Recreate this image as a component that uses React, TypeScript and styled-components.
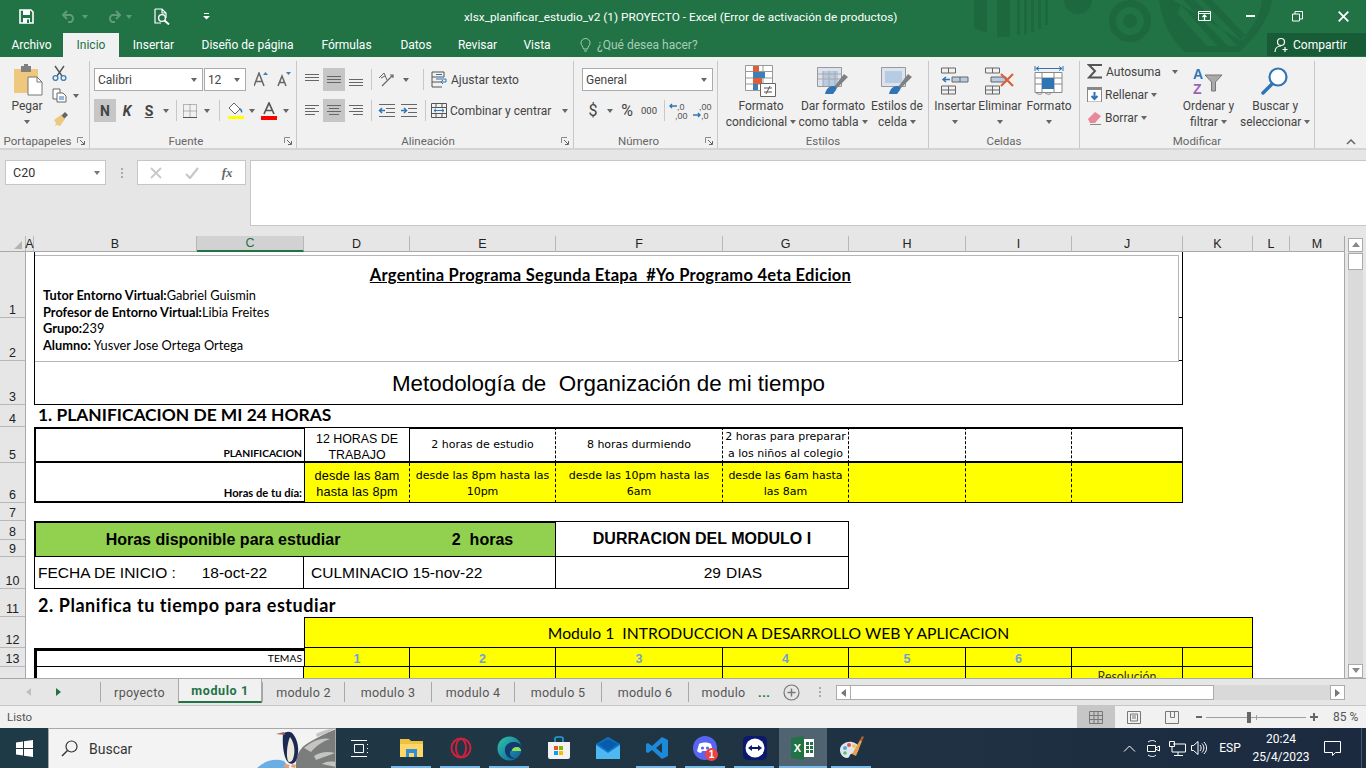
import React from "react";
import styled, { createGlobalStyle } from "styled-components";

const UI = `Roboto, "Noto Sans", sans-serif`;
const CALIBRI = `Lato, "Liberation Sans", sans-serif`;
const ARIAL = `"Liberation Sans", Arial, sans-serif`;
const VERDANA = `"DejaVu Sans", sans-serif`;

const thin = "1px solid #000";
const thick = "2px solid #000";
const heavy = "3px solid #000";
const dash = "1px dashed #000";

const Global = createGlobalStyle`
  html, body { margin: 0; padding: 0; background: #fff; overflow: hidden; }
  * { box-sizing: border-box; }
  svg { display: block; flex-shrink: 0; }
`;

const Window = styled.div`
  width: 1366px;
  height: 768px;
  display: flex;
  flex-direction: column;
  overflow: hidden;
  font-family: ${UI};
`;

/* ---------- title bar ---------- */
const Chrome = styled.div`
  position: relative;
  background: #217346;
`;
const TitleBar = styled.div`
  position: relative;
  height: 33px;
  display: flex;
  align-items: center;
  color: #fff;
  font-size: 11.8px;
`;
const Pattern = styled.svg`
  position: absolute;
  left: 940px;
  top: 0;
  pointer-events: none;
`;
const Qat = styled.div`
  width: 464px;
  display: flex;
  align-items: center;
  padding-left: 19px;
`;
const QatSlot = styled.div<{ $w: number }>`
  width: ${(p) => p.$w}px;
  display: flex;
  align-items: center;
  gap: 5px;
`;
const TitleText = styled.div`
  flex: 1;
  white-space: nowrap;
`;
const WinButtons = styled.div`
  display: flex;
  align-items: center;
`;
const WinButton = styled.div`
  width: 46px;
  height: 30px;
  display: flex;
  align-items: center;
  justify-content: center;
`;

/* ---------- tab row ---------- */
const TabRow = styled.div`
  position: relative;
  height: 24px;
  display: flex;
  align-items: stretch;
  color: #fff;
  font-size: 12px;
`;
const Tab = styled.div<{ $w: number; $active?: boolean }>`
  width: ${(p) => p.$w}px;
  display: flex;
  align-items: center;
  justify-content: center;
  background: ${(p) => (p.$active ? "#f1f1f1" : "transparent")};
  color: ${(p) => (p.$active ? "#217346" : "#fff")};
  white-space: nowrap;
`;
const Hint = styled.div`
  display: flex;
  align-items: center;
  gap: 6px;
  margin-left: 15px;
  color: #a6cdb6;
`;
const Share = styled.div`
  position: absolute;
  right: 0;
  top: 0;
  width: 99px;
  height: 23px;
  display: flex;
  align-items: center;
  gap: 3px;
  padding-left: 7px;
  background: #185c37;
`;

/* ---------- ribbon ---------- */
const Ribbon = styled.div`
  height: 93px;
  display: flex;
  padding-top: 4px;
  background: #f1f1f1;
  border-bottom: 2px solid #d4d4d4;
  color: #444;
  font-size: 12px;
`;
const Group = styled.div<{ $w: number }>`
  width: ${(p) => p.$w}px;
  height: 87px;
  display: flex;
  flex-direction: column;
  border-right: 1px solid #c8c8c8;
`;
const GroupBody = styled.div<{ $pad?: number; $top?: number; $column?: boolean }>`
  height: 72px;
  display: flex;
  flex-direction: ${(p) => (p.$column ? "column" : "row")};
  gap: ${(p) => (p.$column ? "8px" : "0")};
  padding-left: ${(p) => p.$pad ?? 0}px;
  padding-top: ${(p) => p.$top ?? 7}px;
`;
const GroupLabel = styled.div<{ $launch?: boolean }>`
  position: relative;
  height: 15px;
  line-height: 17px;
  padding-right: ${(p) => (p.$launch ? "14px" : "0")};
  text-align: center;
  color: #666;
  font-size: 11.5px;
`;
const Launcher = styled.svg`
  position: absolute;
  right: 4px;
  top: 4px;
`;
const ToolRow = styled.div`
  height: 23px;
  display: flex;
  align-items: center;
`;
const SmallBtn = styled.div<{ $w: number; $active?: boolean; $fs?: number; $ml?: number }>`
  width: ${(p) => p.$w}px;
  height: 23px;
  margin-left: ${(p) => p.$ml ?? 0}px;
  display: flex;
  align-items: center;
  justify-content: center;
  background: ${(p) => (p.$active ? "#c6c6c6" : "transparent")};
  font-size: ${(p) => p.$fs ?? 13}px;
`;
const Letter = styled.span<{ $italic?: boolean; $under?: boolean }>`
  font-family: ${UI};
  font-weight: 700;
  font-size: 14px;
  font-style: ${(p) => (p.$italic ? "italic" : "normal")};
  text-decoration: ${(p) => (p.$under ? "underline" : "none")};
`;
const Rule = styled.div<{ $w: number }>`
  width: ${(p) => p.$w}px;
  height: 21px;
  display: flex;
  justify-content: center;
  &::before {
    content: "";
    width: 1px;
    background: #c8c8c8;
  }
`;
const Caret = styled.span<{ $ml?: number; $color?: string }>`
  display: inline-block;
  width: 0;
  height: 0;
  margin-left: ${(p) => p.$ml ?? 0}px;
  border-left: 3.5px solid transparent;
  border-right: 3.5px solid transparent;
  border-top: 4px solid ${(p) => p.$color ?? "#666"};
`;
const Select = styled.div<{ $w: number }>`
  width: ${(p) => p.$w}px;
  height: 23px;
  display: flex;
  align-items: center;
  justify-content: space-between;
  padding: 0 5px 0 3px;
  margin-right: 1px;
  background: #fff;
  border: 1px solid #ababab;
`;
const LabelBtn = styled.div`
  display: flex;
  align-items: center;
  gap: 3px;
  white-space: nowrap;
`;
const BigBtn = styled.div<{ $w: number; $top?: number }>`
  width: ${(p) => p.$w}px;
  display: flex;
  flex-direction: column;
  align-items: center;
  margin-top: ${(p) => p.$top ?? -4}px;
  line-height: 16px;
  white-space: nowrap;
  text-align: center;
`;
const BigIcon = styled.div`
  height: 34px;
  display: flex;
  align-items: center;
  justify-content: center;
`;
const PasteIcon = styled(BigIcon)`
  height: 37px;
  padding-left: 2px;
`;
const CaretLine = styled.div`
  height: 16px;
  display: flex;
  align-items: center;
  justify-content: center;
  gap: 3px;
`;
const EditColumn = styled.div`
  width: 101px;
  margin-top: -8px;
  padding-left: 7px;
  display: flex;
  flex-direction: column;
`;
const ClipColumn = styled(EditColumn)`
  width: 34px;
  margin: 0 0 0 -2px;
  padding-left: 0;
`;
const EditRow = styled.div`
  height: 23px;
  display: flex;
  align-items: center;
  gap: 3px;
  white-space: nowrap;
`;
const Collapse = styled.div`
  margin-left: auto;
  margin-right: 10px;
  align-self: flex-end;
  padding-bottom: 3px;
`;

/* ---------- formula bar ---------- */
const FormulaBar = styled.div`
  height: 86px;
  display: flex;
  align-items: flex-start;
  padding: 10px 0 0 5px;
  background: #e6e6e6;
`;
const NameBox = styled.div`
  width: 101px;
  height: 25px;
  display: flex;
  align-items: center;
  justify-content: space-between;
  padding: 0 5px 0 7px;
  background: #fff;
  border: 1px solid #c6c6c6;
  font-size: 12.5px;
  color: #333;
`;
const Grip = styled.div<{ $w?: number; $h?: number }>`
  width: ${(p) => p.$w ?? 31}px;
  height: ${(p) => p.$h ?? 25}px;
  display: flex;
  flex-direction: column;
  align-items: center;
  justify-content: center;
  gap: 2px;
  & > i {
    width: 2px;
    height: 2px;
    background: #aaa;
  }
`;
const FxBox = styled.div`
  width: 109px;
  height: 25px;
  display: flex;
  align-items: center;
  margin-right: 4px;
  background: #fff;
  border: 1px solid #c6c6c6;
`;
const FxBtn = styled.div`
  width: 36px;
  display: flex;
  justify-content: center;
  font-family: "Liberation Serif", serif;
  font-style: italic;
  font-weight: 700;
  font-size: 13px;
  color: #666;
`;
const FormulaInput = styled.div`
  flex: 1;
  height: 66px;
  background: #fff;
  border: 1px solid #c6c6c6;
  border-right: 0;
`;

/* ---------- sheet ---------- */
const SheetArea = styled.div`
  height: 442px;
  display: flex;
  background: #e6e6e6;
`;
const COLS = [26, 8, 163, 107, 106, 146, 167, 126, 117, 106, 111, 70, 37, 55];
const ROWS = [16, 66, 43, 44, 22, 36, 40, 18, 19, 17, 32, 28, 31, 19, 60];
const Sheet = styled.div`
  width: 1345px;
  height: 442px;
  overflow: hidden;
  display: grid;
  grid-template-columns: ${COLS.map((c) => c + "px").join(" ")};
  grid-template-rows: ${ROWS.map((r) => r + "px").join(" ")};
  background: #fff;
  border-right: 1px solid #a8a8a8;
`;
const Corner = styled.div`
  grid-column: 1;
  grid-row: 1;
  background: #e6e6e6;
  border-bottom: 1px solid #a8a8a8;
  border-right: 1px solid #b8b8b8;
  display: flex;
  align-items: flex-end;
  justify-content: flex-end;
  padding: 0 3px 2px 0;
`;
const ColHead = styled.div<{ $col: number; $sel?: boolean }>`
  grid-column: ${(p) => p.$col};
  grid-row: 1;
  display: flex;
  align-items: center;
  justify-content: center;
  background: ${(p) => (p.$sel ? "#d2d2d2" : "#e6e6e6")};
  color: ${(p) => (p.$sel ? "#217346" : "#222")};
  border-right: 1px solid #b8b8b8;
  border-bottom: ${(p) => (p.$sel ? "2px solid #217346" : "1px solid #a8a8a8")};
  font-family: ${ARIAL};
  font-size: 12.5px;
`;
const RowHead = styled.div<{ $row: number }>`
  grid-column: 1;
  grid-row: ${(p) => p.$row};
  display: flex;
  align-items: flex-end;
  justify-content: center;
  background: #e6e6e6;
  color: #222;
  border-right: 1px solid #a8a8a8;
  border-bottom: 1px solid #b8b8b8;
  font-family: ${ARIAL};
  font-size: 12.5px;
  line-height: 14px;
`;
const Cell = styled.div<{
  $col: number;
  $span?: number;
  $row: number;
  $rows?: number;
  $bg?: string;
  $t?: string;
  $r?: string;
  $b?: string;
  $l?: string;
}>`
  grid-column: ${(p) => p.$col} / span ${(p) => p.$span ?? 1};
  grid-row: ${(p) => p.$row} / span ${(p) => p.$rows ?? 1};
  display: flex;
  align-items: center;
  justify-content: center;
  text-align: center;
  white-space: pre-wrap;
  color: #000;
  background: ${(p) => p.$bg ?? "transparent"};
  border-top: ${(p) => p.$t ?? "0"};
  border-right: ${(p) => p.$r ?? "0"};
  border-bottom: ${(p) => p.$b ?? "0"};
  border-left: ${(p) => p.$l ?? "0"};
`;
const TitleBox = styled.div`
  grid-column: 3 / span 9;
  grid-row: 2 / span 2;
  z-index: 1;
  margin: 3px 4px -1px 1px;
  padding: 9px 0 0 8px;
  background: #fff;
  border: 1px solid #b5b5b5;
  border-left: 0;
  font-family: ${CALIBRI};
  font-size: 12.8px;
  line-height: 16.5px;
  color: #000;
  white-space: pre;
`;
const BoxTitle = styled.div`
  height: 21px;
  margin-bottom: 1px;
  text-align: center;
  font-size: 16.5px;
  letter-spacing: 0.27px;
  line-height: 20px;
  font-weight: 700;
  text-decoration: underline;
`;
const MainTitle = styled(Cell)`
  font-family: ${ARIAL};
  font-size: 22.4px;
  padding-top: 2px;
`;
const SectionTitle = styled(Cell)`
  justify-content: flex-start;
  padding: 0 0 3px 4px;
  font-family: ${CALIBRI};
  font-weight: 700;
  font-size: 17.4px;
  white-space: pre;
`;
const SectionTitleLower = styled(SectionTitle)`
  padding: 3px 0 0 4px;
  font-size: 18px;
  letter-spacing: 0.55px;
`;
const RightLabel = styled(Cell)`
  justify-content: flex-end;
  align-items: flex-end;
  padding: 0 2px 1px 0;
  font-family: ${CALIBRI};
  font-weight: 700;
  font-size: 10.3px;
  line-height: 14px;
`;
const DayLabel = styled(RightLabel)`
  font-size: 11.2px;
`;
const TopicLabel = styled(RightLabel)`
  align-items: center;
  font-weight: 400;
`;
const ArialCell = styled(Cell)`
  font-family: ${ARIAL};
  font-size: 12.4px;
  line-height: 16px;
  padding-top: 4px;
`;
const WorkHoursCell = styled(Cell)`
  font-family: ${ARIAL};
  font-size: 12.7px;
  letter-spacing: 0.2px;
  line-height: 16px;
  padding: 2px 3px 0;
`;
const VerdanaCell = styled(Cell)`
  font-family: ${VERDANA};
  font-size: 11px;
  line-height: 16.5px;
  padding: 1px 1px 0;
`;
const YellowVerdana = styled(VerdanaCell)`
  padding-top: 3px;
`;
const BannerCell = styled(Cell)`
  font-family: ${ARIAL};
  font-weight: 700;
  font-size: 16px;
`;
const DateCell = styled(Cell)`
  justify-content: flex-start;
  padding-left: 3px;
  font-family: ${ARIAL};
  font-size: 15.5px;
  white-space: pre;
`;
const CulminaCell = styled(DateCell)`
  padding-left: 7px;
`;
const DaysCell = styled(DateCell)`
  justify-content: flex-end;
  padding: 0 2px 0 0;
`;
const ModuleCell = styled(Cell)`
  font-family: ${CALIBRI};
  font-size: 15.7px;
`;
const TopicCell = styled(Cell)`
  font-family: ${ARIAL};
  font-weight: 700;
  font-size: 12.5px;
  color: #6f9fe0;
  padding-top: 3px;
`;
const ResolveCell = styled(Cell)`
  align-items: flex-start;
  padding-top: 2px;
  font-family: ${CALIBRI};
  font-size: 12.4px;
  color: #333;
`;

/* ---------- scrollbars ---------- */
const VScroll = styled.div`
  width: 21px;
  padding: 2px 3px 0 3px;
  display: flex;
  flex-direction: column;
`;
const VTrack = styled.div`
  width: 15px;
  height: 440px;
  display: flex;
  flex-direction: column;
  background: #dadada;
`;
const ScrollBtn = styled.div<{ $w: number; $h: number }>`
  width: ${(p) => p.$w}px;
  height: ${(p) => p.$h}px;
  flex-shrink: 0;
  display: flex;
  align-items: center;
  justify-content: center;
  background: #fff;
  border: 1px solid #ababab;
`;
const VThumb = styled.div`
  width: 15px;
  height: 17px;
  margin-top: 1px;
  background: #fff;
  border: 1px solid #ababab;
`;
const Spacer = styled.div`
  flex: 1;
`;

/* ---------- sheet tabs ---------- */
const TabsBar = styled.div`
  height: 28px;
  display: flex;
  align-items: flex-start;
  background: #e6e6e6;
  border-top: 1px solid #a8a8a8;
  border-bottom: 1px solid #c6c6c6;
  font-size: 12.5px;
  color: #555;
`;
const TabNav = styled.div`
  width: 100px;
  height: 26px;
  display: flex;
  align-items: center;
  gap: 22px;
  padding-left: 25px;
`;
const SheetTab = styled.div<{ $w: number; $active?: boolean }>`
  width: ${(p) => p.$w}px;
  height: ${(p) => (p.$active ? "25px" : "20px")};
  margin-top: ${(p) => (p.$active ? "-1px" : "3px")};
  display: flex;
  align-items: center;
  justify-content: center;
  white-space: nowrap;
  letter-spacing: ${(p) => (p.$active ? "0.6px" : "0.3px")};
  background: ${(p) => (p.$active ? "#f1f1f1" : "transparent")};
  color: ${(p) => (p.$active ? "#217346" : "#555")};
  font-weight: ${(p) => (p.$active ? 700 : 400)};
  border-left: 1px solid #a8a8a8;
  border-right: ${(p) => (p.$active ? "1px solid #a8a8a8" : "0")};
  border-bottom: ${(p) => (p.$active ? "2px solid #217346" : "0")};
  border-top: ${(p) => (p.$active ? "1px solid #a8a8a8" : "0")};
`;
const TabOverflow = styled.div`
  width: 19px;
  margin-top: 3px;
  height: 20px;
  display: flex;
  align-items: center;
  color: #217346;
  font-weight: 700;
  letter-spacing: 0.5px;
`;
const AddSheet = styled.div`
  width: 28px;
  height: 26px;
  display: flex;
  align-items: center;
  justify-content: center;
`;
const HScroll = styled.div`
  width: 509px;
  height: 15px;
  margin: 6px 0 0 1px;
  display: flex;
  background: #d9d9d9;
`;
const HThumb = styled.div`
  width: 363px;
  height: 15px;
  background: #fff;
  border: 1px solid #ababab;
  border-left: 0;
`;

/* ---------- status bar ---------- */
const StatusBar = styled.div`
  height: 22px;
  display: flex;
  align-items: center;
  padding-left: 7px;
  background: #f1f1f1;
  font-size: 11.5px;
  color: #555;
`;
const ViewBtn = styled.div<{ $active?: boolean }>`
  width: 38px;
  height: 22px;
  display: flex;
  align-items: center;
  justify-content: center;
  background: ${(p) => (p.$active ? "#c6c6c6" : "transparent")};
`;
const ZoomMinus = styled.div`
  width: 6px;
  height: 2px;
  margin-left: 5px;
  background: #666;
`;
const ZoomSlider = styled.div`
  position: relative;
  width: 100px;
  height: 1px;
  margin: 0 4px;
  background: #a0a0a0;
`;
const ZoomThumb = styled.div`
  position: absolute;
  left: 41px;
  top: -5px;
  width: 4px;
  height: 11px;
  background: #666;
`;
const ZoomTick = styled.div`
  position: absolute;
  left: 50px;
  top: -2px;
  width: 1px;
  height: 5px;
  background: #a0a0a0;
`;
const ZoomPlus = styled.div`
  position: relative;
  width: 8px;
  height: 2px;
  background: #666;
  &::after {
    content: "";
    position: absolute;
    left: 3px;
    top: -3px;
    width: 2px;
    height: 8px;
    background: #666;
  }
`;
const ZoomValue = styled.div`
  width: 48px;
  padding-left: 15px;
  white-space: nowrap;
  font-size: 12px;
`;

/* ---------- taskbar ---------- */
const Taskbar = styled.div`
  height: 40px;
  display: flex;
  align-items: center;
  background: linear-gradient(90deg, #1f3a47 0%, #203544 50%, #1c2a40 100%);
  color: #fff;
`;
const StartBtn = styled.div`
  width: 48px;
  height: 40px;
  display: flex;
  align-items: center;
  justify-content: center;
`;
const SearchBox = styled.div`
  position: relative;
  width: 288px;
  height: 40px;
  display: flex;
  align-items: center;
  gap: 11px;
  padding-left: 12px;
  background: #f3f3f3;
  border: 1px solid #a8a8a8;
  border-bottom: 0;
  color: #333;
  font-size: 14px;
  overflow: hidden;
`;
const Penguin = styled.svg`
  position: absolute;
  right: -1px;
  top: -1px;
`;
const TaskViewBtn = styled.div`
  width: 51px;
  height: 40px;
  padding-right: 3px;
  display: flex;
  align-items: center;
  justify-content: center;
`;
const TaskIcons = styled.div`
  display: flex;
  height: 40px;
`;
const TaskIcon = styled.div<{ $w?: number; $on?: boolean; $open?: boolean }>`
  position: relative;
  width: ${(p) => p.$w ?? 49}px;
  height: 40px;
  display: flex;
  align-items: center;
  justify-content: center;
  background: ${(p) => (p.$on ? "#4f6470" : "transparent")};
  &::after {
    content: "";
    display: ${(p) => (p.$open ? "block" : "none")};
    position: absolute;
    left: ${(p) => (p.$on ? "0" : "4px")};
    right: ${(p) => (p.$on ? "0" : "5px")};
    bottom: 0;
    height: 2px;
    background: #76b9ed;
  }
`;
const Tray = styled.div`
  margin-left: auto;
  display: flex;
  align-items: center;
  height: 40px;
  font-size: 12px;
`;
const TraySlot = styled.div<{ $w: number }>`
  width: ${(p) => p.$w}px;
  display: flex;
  justify-content: center;
`;
const Clock = styled.div`
  width: 60px;
  text-align: center;
  line-height: 18px;
  white-space: nowrap;
`;
const ShowDesktop = styled.div`
  width: 13px;
  height: 40px;
  padding-left: 8px;
  &::before {
    content: "";
    display: block;
    width: 1px;
    height: 40px;
    background: #46586a;
  }
`;

/* ---------- icons ---------- */
const SaveIcon = () => (
  <svg width="15" height="15" viewBox="0 0 15 15">
    <path d="M1 1h11l2 2v11H1z" fill="none" stroke="#fff" strokeWidth="1.6" />
    <path d="M4 1h7v5H4z" fill="#fff" />
    <path d="M4 9h7v5H4z" fill="#fff" />
    <path d="M8 10.5h2V14H8z" fill="#217346" />
  </svg>
);
const UndoIcon = () => (
  <svg width="15" height="13" viewBox="0 0 15 13">
    <path d="M5 1L1 5l4 4M1 5h8a4 4 0 0 1 0 7H6" fill="none" stroke="#5f9a7b" strokeWidth="2" />
  </svg>
);
const RedoIcon = () => (
  <svg width="15" height="13" viewBox="0 0 15 13">
    <path d="M10 1l4 4-4 4M14 5H6a4 4 0 0 0 0 7h3" fill="none" stroke="#5f9a7b" strokeWidth="2" />
  </svg>
);
const PreviewIcon = () => (
  <svg width="16" height="17" viewBox="0 0 16 17">
    <path d="M1 1h7l4 4v5M1 1v14h6M8 1v4h4" fill="none" stroke="#fff" strokeWidth="1.2" />
    <circle cx="8" cy="10" r="3.4" fill="none" stroke="#fff" strokeWidth="1.4" />
    <path d="M10.5 12.5L15 16.4" stroke="#fff" strokeWidth="2" />
  </svg>
);
const Launch = () => (
  <Launcher width="8" height="8" viewBox="0 0 8 8">
    <path d="M0.5 6V0.5H6" fill="none" stroke="#8a8a8a" />
    <path d="M3 3l4 4M7.5 4v3.5H4" fill="none" stroke="#666" />
  </Launcher>
);
const Paste = () => (
  <svg width="30" height="32" viewBox="0 0 30 32">
    <path d="M1 5h24v24H1z" fill="#edc87e" />
    <path d="M8 2h10v6H8z" fill="#7f7f7f" />
    <path d="M11 0h4v3h-4z" fill="#7f7f7f" />
    <path d="M15 13h9l5 5v13H15z" fill="#fff" stroke="#777" />
    <path d="M24 13v5h5" fill="none" stroke="#777" />
  </svg>
);
const Scissors = () => (
  <svg width="15" height="16" viewBox="0 0 15 16">
    <path d="M3 1l7 10M12 1L5 11" stroke="#555" strokeWidth="1.4" fill="none" />
    <circle cx="3.5" cy="13" r="2.4" fill="none" stroke="#3f7fb8" strokeWidth="1.4" />
    <circle cx="11.5" cy="13" r="2.4" fill="none" stroke="#3f7fb8" strokeWidth="1.4" />
  </svg>
);
const Copy = () => (
  <svg width="15" height="15" viewBox="0 0 15 15">
    <path d="M1 1h7v10H1z" fill="#fff" stroke="#666" />
    <path d="M5 5h6l3 3v6H5z" fill="#fff" stroke="#666" />
    <path d="M7 9h5M7 11h5" stroke="#2f75b5" />
  </svg>
);
const Brush = () => (
  <svg width="16" height="14" viewBox="0 0 16 14">
    <path d="M9 4l4-4 3 3-4 4z" fill="#666" />
    <path d="M2 8l7-5 4 4-5 7-3-1-2 1 1-3z" fill="#edc87e" />
  </svg>
);
const GrowA = ({ small, up }: { small?: boolean; up?: boolean }) => (
  <svg width="14" height="15" viewBox="0 0 14 15">
    <path d={small ? "M1 14L5 4l4 10M2.6 10.5h5" : "M0 14L5 1l5 13M2 9.5h6"} fill="none" stroke="#666" strokeWidth="1.5" />
    <path d={up ? "M9 3l2.5-3L14 3z" : "M9 0h5l-2.5 3z"} fill="#3f7fb8" />
  </svg>
);
const BordersIcon = () => (
  <svg width="14" height="14" viewBox="0 0 14 14">
    <path d="M.5.5h13v13H.5zM7 .5v13M.5 7h13" fill="none" stroke="#777" strokeDasharray="1 1" />
    <path d="M0 13.5h14" stroke="#555" />
  </svg>
);
const FillIcon = () => (
  <svg width="17" height="18" viewBox="0 0 17 18">
    <path d="M7 1l6 6-5 5-6-6z" fill="#fff" stroke="#666" />
    <path d="M13 6c2 1 3 3 2 5-1-1-2-2-2-5z" fill="#2f75b5" />
    <path d="M1 14h16v3H1z" fill="#ffff00" />
  </svg>
);
const ColorIcon = () => (
  <svg width="16" height="18" viewBox="0 0 16 18">
    <path d="M3 12L8 1l5 11M4.7 8.5h6.6" fill="none" stroke="#555" strokeWidth="1.7" />
    <path d="M0 14h16v4H0z" fill="#f00" />
  </svg>
);
const Lines = ({ rows }: { rows: [number, number, number?][] }) => (
  <svg width="16" height="14" viewBox="0 0 16 14">
    {rows.map(([y, x0, x1], i) => (
      <path key={i} d={`M${x0} ${y}.5H${x1 ?? 16 - x0}`} stroke="#666" />
    ))}
  </svg>
);
const Orient = () => (
  <svg width="17" height="15" viewBox="0 0 17 15">
    <path d="M1 6l5-5 3 7M3 6l4-2" fill="none" stroke="#666" />
    <path d="M4 14L15 3M12 3h3v3" fill="none" stroke="#666" strokeWidth="1.2" />
  </svg>
);
const Indent = ({ back }: { back?: boolean }) => (
  <svg width="17" height="13" viewBox="0 0 17 13">
    <path d="M1 .5h16M8 4.5h9M8 8.5h9M1 12.5h16" stroke="#666" />
    <path d={back ? "M7 6.5H2M4 4L1.5 6.5 4 9" : "M1 6.5h5M4 4l2.5 2.5L4 9"} fill="none" stroke="#2f75b5" strokeWidth="1.5" />
  </svg>
);
const Wrap = () => (
  <svg width="17" height="17" viewBox="0 0 17 17">
    <path d="M1 1h12v5H1zM1 6v10h10M1 11h10" fill="none" stroke="#555" />
    <path d="M5 3.5h6M5 8h10v3H10M12 9l-2 2 2 2" fill="none" stroke="#2f75b5" />
  </svg>
);
const Merge = () => (
  <svg width="16" height="15" viewBox="0 0 16 15">
    <path d="M.5.5h15v14H.5zM.5 4.5h15M.5 10.5h15M5 .5v4M11 .5v4M5 10.5v4M11 10.5v4" fill="none" stroke="#555" />
    <path d="M3 7.5h10M5 5.8L3 7.5l2 1.7M11 5.8l2 1.7-2 1.7" fill="none" stroke="#2f75b5" />
  </svg>
);
const DecIcon = ({ more }: { more?: boolean }) => (
  <svg width="20" height="20" viewBox="0 0 20 20">
    <text x={more ? 7 : 8} y="9" fontSize="9" fontFamily={ARIAL} fill="#555">{more ? ",00" : ",0"}</text>
    <text x={more ? 9 : 6} y="18" fontSize="9" fontFamily={ARIAL} fill="#555">{more ? ",0" : ",00"}</text>
    <path d={more ? "M1 14h7M6 12l2 2-2 2" : "M8 5H1M3 3L1 5l2 2"} fill="none" stroke="#2f75b5" strokeWidth="1.4" />
  </svg>
);
const CondFormat = () => (
  <svg width="32" height="32" viewBox="0 0 32 32">
    <path d="M.5.5h27v25H.5zM9 .5v25M18 .5v25M.5 6.5h27M.5 13h27M.5 19h27" fill="#fff" stroke="#999" />
    <path d="M8 1h6v6H8z" fill="#d9603c" />
    <path d="M8 7h12v6H8z" fill="#3f7fb8" />
    <path d="M8 13h9v6H8z" fill="#d9603c" />
    <path d="M8 19h5v6H8z" fill="#3f7fb8" />
    <path d="M15.5 18.5h15v13h-15z" fill="#fff" stroke="#666" />
    <path d="M19 23h8M19 27h8M25 21l-4 8" stroke="#555" fill="none" />
  </svg>
);
const TableStyle = ({ fillAll }: { fillAll?: boolean }) => (
  <svg width="32" height="32" viewBox="0 0 32 32">
    <path d="M.5 2.5h24v19H.5z" fill="#dce3ee" stroke="#999" />
    <path d={fillAll ? "M4 6h17v12H4z" : "M6 6h15v15H6z"} fill="#b7cbe2" />
    {!fillAll && <path d="M6 6v15M12 6v15M18 6v15M1 9h23M1 14h23" stroke="#aaa" fill="none" />}
    <path d="M17 22l10-13 4 3-12 12z" fill="#808080" />
    <path d="M8 29c1-5 4-8 8-8 3 0 4 2 3 4l-3 4z" fill="#2f75b5" />
  </svg>
);
const InsertIcon = () => (
  <svg width="28" height="28" viewBox="0 0 28 28">
    <path d="M.5 1h14v5H.5zM7.5 1v5M.5 19h14v8H.5zM.5 23h14M7.5 19v8" fill="none" stroke="#666" />
    <path d="M11 10h16v5H11z" fill="#b7cbe2" stroke="#666" />
    <path d="M19 10v5" stroke="#666" />
    <path d="M9 12.5H2M5 10l-3 2.5L5 15" fill="none" stroke="#2f75b5" strokeWidth="1.5" />
  </svg>
);
const DeleteIcon = () => (
  <svg width="30" height="28" viewBox="0 0 30 28">
    <path d="M.5 1h14v5H.5zM7.5 1v5M.5 19h14v8H.5zM.5 23h14M7.5 19v8" fill="none" stroke="#666" />
    <path d="M6 10h15v5H6z" fill="#b7cbe2" stroke="#666" />
    <path d="M16 7l12 12M28 7L16 19" stroke="#d9603c" strokeWidth="2.2" />
  </svg>
);
const FormatIcon = () => (
  <svg width="30" height="30" viewBox="0 0 30 30">
    <path d="M1 0v5M29 0v5M2 2.5h26M2 2.5l3-2M2 2.5l3 2M28 2.5l-3-2M28 2.5l-3 2" fill="none" stroke="#2f75b5" />
    <path d="M1 6.5h27v20H1zM8 6.5v20M20 6.5v20M1 12h27M1 18h27" fill="#fff" stroke="#888" />
    <path d="M8 12h12v11H8z" fill="#2f75b5" />
    <path d="M1 26c3 3 7 3 8 0M10 26c3 3 7 3 8 0" fill="none" stroke="#888" />
  </svg>
);
const Sigma = () => (
  <svg width="16" height="15" viewBox="0 0 16 15">
    <path d="M15 1H2l6 6-6 6.5h13" fill="none" stroke="#555" strokeWidth="2" />
  </svg>
);
const FillDown = () => (
  <svg width="15" height="15" viewBox="0 0 15 15">
    <path d="M.5 2h14v13H.5z" fill="#fff" stroke="#888" />
    <path d="M0 0h15v3H0z" fill="#888" />
    <path d="M7.5 5v7M4.5 9l3 3 3-3" fill="none" stroke="#2f75b5" strokeWidth="2" />
  </svg>
);
const Eraser = () => (
  <svg width="15" height="15" viewBox="0 0 15 15">
    <path d="M1 9l7-7 6 4-6 7H3z" fill="#e88898" />
    <path d="M3 14.5h11" stroke="#888" />
  </svg>
);
const SortIcon = () => (
  <svg width="30" height="30" viewBox="0 0 30 30">
    <text x="0" y="13" fontSize="14" fontWeight="700" fontFamily={ARIAL} fill="#2f75b5">A</text>
    <text x="0" y="28" fontSize="14" fontWeight="700" fontFamily={ARIAL} fill="#9a63b8">Z</text>
    <path d="M12 9h17l-6.5 7v9h-4v-9z" fill="#aaa" stroke="#777" />
  </svg>
);
const FindIcon = () => (
  <svg width="28" height="28" viewBox="0 0 28 28">
    <circle cx="17" cy="10" r="8.5" fill="#fff" stroke="#2f75b5" strokeWidth="2.2" />
    <path d="M11 17L2 26" stroke="#2f75b5" strokeWidth="3.5" strokeLinecap="round" />
  </svg>
);
const Cross = () => (
  <svg width="12" height="12" viewBox="0 0 12 12">
    <path d="M1 1l10 10M11 1L1 11" stroke="#c8c8c8" strokeWidth="1.8" />
  </svg>
);
const Check = () => (
  <svg width="14" height="12" viewBox="0 0 14 12">
    <path d="M1 7l4 4 8-10" fill="none" stroke="#c8c8c8" strokeWidth="2.2" />
  </svg>
);
const GridIcon = ({ d }: { d: string }) => (
  <svg width="14" height="13" viewBox="0 0 14 13">
    <path d="M.5.5h13v12H.5z" fill="none" stroke="#777" />
    <path d={d} fill="none" stroke="#777" />
  </svg>
);
const Triangle = ({ dir, color }: { dir: "left" | "right" | "up" | "down"; color: string }) => {
  const d = { left: "M6 0v8L1 4z", right: "M1 0v8l5-4z", up: "M0 6h8L4 1z", down: "M0 1h8L4 6z" }[dir];
  return (
    <svg width="8" height="8" viewBox="0 0 8 8">
      <path d={d} fill={color} />
    </svg>
  );
};

const tabs: [string, number, boolean?][] = [
  ["Archivo", 63],
  ["Inicio", 56, true],
  ["Insertar", 69],
  ["Diseño de página", 119],
  ["Fórmulas", 79],
  ["Datos", 60],
  ["Revisar", 63],
  ["Vista", 56],
];
const sheetTabs: [string, number, boolean?][] = [
  ["rpoyecto", 78],
  ["modulo 1", 84, true],
  ["modulo 2", 82],
  ["modulo 3", 87],
  ["modulo 4", 83],
  ["modulo 5", 87],
  ["modulo 6", 87],
  ["modulo", 70],
];
const colLetters = ["A", "B", "C", "D", "E", "F", "G", "H", "I", "J", "K", "L", "M"];

export default function App() {
  return (
    <Window>
      <Global />
      <Chrome>
        <Pattern width="340" height="57" viewBox="0 0 340 57">
          <g fill="#1e683f">
            <path d="M34 0h13v33l-13-5zM57 0h13v37H57zM77 0h3v35h-3zM84 0h3v34h-3zM91 0h3v32h-3zM98 0h3v29h-3zM105 0h3v25h-3z" />
            <circle cx="138" cy="0" r="14" />
            <path fillRule="evenodd" d="M190 0a21 21 0 1 0 .01 0zM190 7a14 14 0 1 1-.01 0z" />
            <circle cx="190" cy="21" r="7" />
            <path fillRule="evenodd" d="M219 0c3 28 22 52 28 52h52c12-10 30-30 33-52h-10c-2 18-12 32-22 40L233 0zM241 5l36 41h-10L238 14zM255 0l42 46h-9L243 0zM272 0l34 36-4 5L262 0z" />
          </g>
        </Pattern>
        <TitleBar>
          <Qat>
            <QatSlot $w={43}><SaveIcon /></QatSlot>
            <QatSlot $w={44}><UndoIcon /><Caret $color="#5f9a7b" /></QatSlot>
            <QatSlot $w={48}><RedoIcon /><Caret $color="#5f9a7b" /></QatSlot>
            <QatSlot $w={49}><PreviewIcon /></QatSlot>
            <QatSlot $w={20}>
              <svg width="7" height="7" viewBox="0 0 7 7"><path d="M1 .5h5" stroke="#fff" /><path d="M0 3h7L3.5 6.5z" fill="#fff" /></svg>
            </QatSlot>
          </Qat>
          <TitleText>xlsx_planificar_estudio_v2 (1) PROYECTO - Excel (Error de activación de productos)</TitleText>
          <WinButtons>
            <WinButton>
              <svg width="14" height="11" viewBox="0 0 14 11"><path d="M.5.5h12v9H.5zM.5 2.5h12" fill="none" stroke="#fff" /><path d="M6.5 9V4M4.5 6l2-2 2 2" fill="none" stroke="#fff" strokeWidth="1.3" /></svg>
            </WinButton>
            <WinButton>
              <svg width="10" height="3" viewBox="0 0 10 3"><path d="M0 0h9v2H0z" fill="#fff" /></svg>
            </WinButton>
            <WinButton>
              <svg width="11" height="11" viewBox="0 0 11 11"><path d="M.5 3h7v7h-7zM3 3V.5h7.5V8H8" fill="none" stroke="#fff" /></svg>
            </WinButton>
            <WinButton>
              <svg width="11" height="11" viewBox="0 0 11 11"><path d="M.7.7l9.6 9.6M10.3.7L.7 10.3" stroke="#fff" strokeWidth="1.8" /></svg>
            </WinButton>
          </WinButtons>
        </TitleBar>

        <TabRow>
          {tabs.map(([name, w, active]) => (
            <Tab key={name} $w={w} $active={active}>{name}</Tab>
          ))}
          <Hint>
            <svg width="11" height="15" viewBox="0 0 11 15"><path d="M3.5 11C3 8 1 7.5 1 5a4.5 4.5 0 0 1 9 0c0 2.5-2 3-2.5 6zM4 13h3" fill="none" stroke="#a6cdb6" /></svg>
            ¿Qué desea hacer?
          </Hint>
          <Share>
            <svg width="16" height="16" viewBox="0 0 16 16"><circle cx="7" cy="5" r="3.5" fill="none" stroke="#fff" strokeWidth="1.2" /><path d="M1 15c0-4 3-6 6-6M11 10v5M8.5 12.5h5" fill="none" stroke="#fff" strokeWidth="1.2" /></svg>
            Compartir
          </Share>
        </TabRow>
      </Chrome>

      <Ribbon>
        <Group $w={90}>
          <GroupBody $top={0}>
            <BigBtn $w={54} $top={0}>
              <PasteIcon><Paste /></PasteIcon>
              Pegar
              <CaretLine><Caret /></CaretLine>
            </BigBtn>
            <ClipColumn>
              <EditRow><Scissors /></EditRow>
              <EditRow><Copy /><Caret $ml={3} /></EditRow>
              <EditRow><Brush /></EditRow>
            </ClipColumn>
          </GroupBody>
          <GroupLabel $launch>Portapapeles<Launch /></GroupLabel>
        </Group>

        <Group $w={207}>
          <GroupBody $pad={4} $column>
            <ToolRow>
              <Select $w={110}>Calibri<Caret /></Select>
              <Select $w={42}>12<Caret /></Select>
              <SmallBtn $w={22} $ml={4}><GrowA up /></SmallBtn>
              <SmallBtn $w={24}><GrowA small /></SmallBtn>
            </ToolRow>
            <ToolRow>
              <SmallBtn $w={22} $active><Letter>N</Letter></SmallBtn>
              <SmallBtn $w={22}><Letter $italic>K</Letter></SmallBtn>
              <SmallBtn $w={22}><Letter $under>S</Letter></SmallBtn>
              <SmallBtn $w={12}><Caret /></SmallBtn>
              <Rule $w={8} />
              <SmallBtn $w={20}><BordersIcon /></SmallBtn>
              <SmallBtn $w={14}><Caret /></SmallBtn>
              <Rule $w={10} />
              <SmallBtn $w={22}><FillIcon /></SmallBtn>
              <SmallBtn $w={12}><Caret /></SmallBtn>
              <SmallBtn $w={22}><ColorIcon /></SmallBtn>
              <SmallBtn $w={12}><Caret /></SmallBtn>
            </ToolRow>
          </GroupBody>
          <GroupLabel $launch>Fuente<Launch /></GroupLabel>
        </Group>

        <Group $w={277}>
          <GroupBody $pad={4} $column>
            <ToolRow>
              <SmallBtn $w={22}><Lines rows={[[1, 1], [4, 1], [7, 1]]} /></SmallBtn>
              <SmallBtn $w={22} $active><Lines rows={[[3, 1], [6, 1], [9, 1]]} /></SmallBtn>
              <SmallBtn $w={22}><Lines rows={[[6, 1], [9, 1], [12, 1]]} /></SmallBtn>
              <Rule $w={8} />
              <SmallBtn $w={22}><Orient /></SmallBtn>
              <SmallBtn $w={18}><Caret /></SmallBtn>
              <Rule $w={16} />
              <LabelBtn><Wrap />Ajustar texto</LabelBtn>
            </ToolRow>
            <ToolRow>
              <SmallBtn $w={22}><Lines rows={[[1, 1, 15], [4, 1, 11], [7, 1, 15], [10, 1, 11]]} /></SmallBtn>
              <SmallBtn $w={22} $active><Lines rows={[[1, 1], [4, 3], [7, 1], [10, 3]]} /></SmallBtn>
              <SmallBtn $w={22}><Lines rows={[[1, 1, 15], [4, 5, 15], [7, 1, 15], [10, 5, 15]]} /></SmallBtn>
              <Rule $w={8} />
              <SmallBtn $w={22}><Indent back /></SmallBtn>
              <SmallBtn $w={22}><Indent /></SmallBtn>
              <Rule $w={12} />
              <LabelBtn><Merge />Combinar y centrar<Caret $ml={8} /></LabelBtn>
            </ToolRow>
          </GroupBody>
          <GroupLabel $launch>Alineación<Launch /></GroupLabel>
        </Group>

        <Group $w={144}>
          <GroupBody $pad={8} $column>
            <ToolRow><Select $w={131}>General<Caret /></Select></ToolRow>
            <ToolRow>
              <SmallBtn $w={22} $fs={16}>$</SmallBtn>
              <SmallBtn $w={12}><Caret /></SmallBtn>
              <SmallBtn $w={22} $fs={16}>%</SmallBtn>
              <SmallBtn $w={22} $fs={9.5}>000</SmallBtn>
              <Rule $w={8} />
              <SmallBtn $w={22}><DecIcon /></SmallBtn>
              <SmallBtn $w={24}><DecIcon more /></SmallBtn>
            </ToolRow>
          </GroupBody>
          <GroupLabel $launch>Número<Launch /></GroupLabel>
        </Group>

        <Group $w={211}>
          <GroupBody $pad={10}>
            <BigBtn $w={66}><BigIcon><CondFormat /></BigIcon>Formato<CaretLine>condicional<Caret /></CaretLine></BigBtn>
            <BigBtn $w={78}><BigIcon><TableStyle /></BigIcon>Dar formato<CaretLine>como tabla<Caret /></CaretLine></BigBtn>
            <BigBtn $w={50}><BigIcon><TableStyle fillAll /></BigIcon>Estilos de<CaretLine>celda<Caret /></CaretLine></BigBtn>
          </GroupBody>
          <GroupLabel>Estilos</GroupLabel>
        </Group>

        <Group $w={151}>
          <GroupBody $pad={3}>
            <BigBtn $w={46}><BigIcon><InsertIcon /></BigIcon>Insertar<CaretLine><Caret /></CaretLine></BigBtn>
            <BigBtn $w={44}><BigIcon><DeleteIcon /></BigIcon>Eliminar<CaretLine><Caret /></CaretLine></BigBtn>
            <BigBtn $w={54}><BigIcon><FormatIcon /></BigIcon>Formato<CaretLine><Caret /></CaretLine></BigBtn>
          </GroupBody>
          <GroupLabel>Celdas</GroupLabel>
        </Group>

        <Group $w={235}>
          <GroupBody>
            <EditColumn>
              <EditRow><Sigma />Autosuma<Caret $ml={8} /></EditRow>
              <EditRow><FillDown />Rellenar<Caret /></EditRow>
              <EditRow><Eraser />Borrar<Caret /></EditRow>
            </EditColumn>
            <BigBtn $w={56}><BigIcon><SortIcon /></BigIcon>Ordenar y<CaretLine>filtrar<Caret /></CaretLine></BigBtn>
            <BigBtn $w={78}><BigIcon><FindIcon /></BigIcon>Buscar y<CaretLine>seleccionar<Caret /></CaretLine></BigBtn>
          </GroupBody>
          <GroupLabel>Modificar</GroupLabel>
        </Group>

        <Collapse>
          <svg width="10" height="6" viewBox="0 0 10 6"><path d="M1 5l4-4 4 4" fill="none" stroke="#666" strokeWidth="1.5" /></svg>
        </Collapse>
      </Ribbon>

      <FormulaBar>
        <NameBox>C20<Caret $color="#777" /></NameBox>
        <Grip><i /><i /><i /></Grip>
        <FxBox>
          <FxBtn><Cross /></FxBtn>
          <FxBtn><Check /></FxBtn>
          <FxBtn>fx</FxBtn>
        </FxBox>
        <FormulaInput />
      </FormulaBar>

      <SheetArea>
        <Sheet>
          <Corner>
            <svg width="8" height="8" viewBox="0 0 8 8"><path d="M8 0v8H0z" fill="#b4b4b4" /></svg>
          </Corner>
          {colLetters.map((l, i) => (
            <ColHead key={l} $col={i + 2} $sel={l === "C"}>{l}</ColHead>
          ))}
          {/* row 14 is cut by the sheet tabs, its number doesn't show */}
          {Array.from({ length: 14 }, (_, i) => (
            <RowHead key={i} $row={i + 2}>{i < 13 ? i + 1 : ""}</RowHead>
          ))}

          {/* rows 1-3: heading */}
          <Cell $col={3} $span={9} $row={2} $l={thin} $r={thin} $b={thin} />
          <Cell $col={3} $span={9} $row={3} $l={thin} $r={thin} $b={thin} />
          <TitleBox>
            <BoxTitle>Argentina Programa Segunda Etapa  #Yo Programo 4eta Edicion</BoxTitle>
            <div><b>Tutor Entorno Virtual:</b>Gabriel Guismin</div>
            <div><b>Profesor de Entorno Virtual:</b>Libia Freites</div>
            <div><b>Grupo:</b>239</div>
            <div><b>Alumno:</b> Yusver Jose Ortega Ortega</div>
          </TitleBox>
          <MainTitle $col={3} $span={9} $row={4} $l={thin} $r={thin} $b={thin}>Metodología de  Organización de mi tiempo</MainTitle>

          {/* rows 4-6: planificacion */}
          <SectionTitle $col={3} $span={9} $row={5}>1. PLANIFICACION DE MI 24 HORAS</SectionTitle>
          <RightLabel $col={3} $span={2} $row={6} $t={thick} $l={thick} $b={thick}>PLANIFICACION</RightLabel>
          <ArialCell $col={5} $row={6} $t={thin} $l={thin} $r={thin} $b={thick}>12 HORAS DE TRABAJO</ArialCell>
          <VerdanaCell $col={6} $row={6} $t={thick} $r={dash} $b={thick}>2 horas de estudio</VerdanaCell>
          <VerdanaCell $col={7} $row={6} $t={thick} $r={dash} $b={thick}>8 horas durmiendo</VerdanaCell>
          <VerdanaCell $col={8} $row={6} $t={thick} $r={dash} $b={thick}>2 horas para preparar a los niños al colegio</VerdanaCell>
          <Cell $col={9} $row={6} $t={thick} $r={dash} $b={thick} />
          <Cell $col={10} $row={6} $t={thick} $r={dash} $b={thick} />
          <Cell $col={11} $row={6} $t={thick} $r={thin} $b={thick} />

          <DayLabel $col={3} $span={2} $row={7} $l={thick} $b={thick}>Horas de tu día:</DayLabel>
          <WorkHoursCell $col={5} $row={7} $bg="#ffff00" $l={thin} $r={dash} $b={thin}>desde las 8am hasta las 8pm</WorkHoursCell>
          <YellowVerdana $col={6} $row={7} $bg="#ffff00" $r={dash} $b={thin}>desde las 8pm hasta las 10pm</YellowVerdana>
          <YellowVerdana $col={7} $row={7} $bg="#ffff00" $r={dash} $b={thin}>desde las 10pm hasta las 6am</YellowVerdana>
          <YellowVerdana $col={8} $row={7} $bg="#ffff00" $r={dash} $b={thin}>desde las 6am hasta las 8am</YellowVerdana>
          <Cell $col={9} $row={7} $bg="#ffff00" $r={dash} $b={thin} />
          <Cell $col={10} $row={7} $bg="#ffff00" $r={dash} $b={thin} />
          <Cell $col={11} $row={7} $bg="#ffff00" $r={thin} $b={thin} />

          {/* rows 8-10: disponibilidad */}
          <BannerCell $col={3} $span={3} $row={9} $rows={2} $bg="#92d050" $t={thick} $l={thick} $b={thin}>Horas disponible para estudiar</BannerCell>
          <BannerCell $col={6} $row={9} $rows={2} $bg="#92d050" $t={thick} $r={thin} $b={thin}>2  horas</BannerCell>
          <BannerCell $col={7} $span={2} $row={9} $rows={2} $t={thin} $r={thin} $b={thin}>DURRACION DEL MODULO I</BannerCell>
          <DateCell $col={3} $span={2} $row={11} $l={thin} $r={thin} $b={thin}>FECHA DE INICIO :      18-oct-22</DateCell>
          <CulminaCell $col={5} $span={2} $row={11} $r={thin} $b={thin}>CULMINACIO 15-nov-22</CulminaCell>
          <DaysCell $col={7} $row={11} $b={thin}>29</DaysCell>
          <DateCell $col={8} $row={11} $r={thin} $b={thin}>DIAS</DateCell>

          {/* rows 11-14: modulo */}
          <SectionTitleLower $col={3} $span={9} $row={12}>2. Planifica tu tiempo para estudiar</SectionTitleLower>
          <ModuleCell $col={5} $span={8} $row={13} $bg="#ffff00" $t={thin} $l={thin} $r={thin} $b={thin}>Modulo 1  INTRODUCCION A DESARROLLO WEB Y APLICACION</ModuleCell>
          <TopicLabel $col={3} $span={2} $row={14} $t={heavy} $l={heavy} $b={thin}>TEMAS</TopicLabel>
          {["1", "2", "3", "4", "5", "6", "", ""].map((n, i) => (
            <TopicCell key={i} $col={i + 5} $row={14} $bg="#ffff00" $l={i === 0 ? thin : undefined} $r={thin} $b={thin}>{n}</TopicCell>
          ))}
          <Cell $col={3} $span={2} $row={15} $l={heavy} $r={thin} />
          {[0, 1, 2, 3, 4, 5, 6, 7].map((i) =>
            i === 6 ? (
              <ResolveCell key={i} $col={i + 5} $row={15} $bg="#ffff00" $r={thin}>Resolución</ResolveCell>
            ) : (
              <Cell key={i} $col={i + 5} $row={15} $bg="#ffff00" $r={thin} />
            )
          )}
        </Sheet>
        <VScroll>
          <VTrack>
            <ScrollBtn $w={15} $h={14}><Triangle dir="up" color="#888" /></ScrollBtn>
            <VThumb />
            <Spacer />
            <ScrollBtn $w={15} $h={14}><Triangle dir="down" color="#888" /></ScrollBtn>
          </VTrack>
        </VScroll>
      </SheetArea>

      <TabsBar>
        <TabNav>
          <Triangle dir="left" color="#c0c0c0" />
          <Triangle dir="right" color="#217346" />
        </TabNav>
        {sheetTabs.map(([name, w, active]) => (
          <SheetTab key={name} $w={w} $active={active}>{name}</SheetTab>
        ))}
        <TabOverflow>...</TabOverflow>
        <AddSheet>
          <svg width="17" height="17" viewBox="0 0 17 17"><circle cx="8.5" cy="8.5" r="7.5" fill="none" stroke="#777" strokeWidth="1.2" /><path d="M8.5 4.5v8M4.5 8.5h8" stroke="#777" strokeWidth="1.4" /></svg>
        </AddSheet>
        <Grip $w={30} $h={26}><i /><i /><i /></Grip>
        <HScroll>
          <ScrollBtn $w={15} $h={15}><Triangle dir="left" color="#777" /></ScrollBtn>
          <HThumb />
          <Spacer />
          <ScrollBtn $w={15} $h={15}><Triangle dir="right" color="#777" /></ScrollBtn>
        </HScroll>
      </TabsBar>

      <StatusBar>
        <span>Listo</span>
        <Spacer />
        <ViewBtn $active><GridIcon d="M5 .5v12M9 .5v12M.5 4.5h13M.5 8.5h13" /></ViewBtn>
        <ViewBtn><GridIcon d="M3.5 3h7v7h-7zM5 5h4M5 7h4" /></ViewBtn>
        <ViewBtn><GridIcon d="M5.5.5v6h4v-6" /></ViewBtn>
        <ZoomMinus />
        <ZoomSlider><ZoomThumb /><ZoomTick /></ZoomSlider>
        <ZoomPlus />
        <ZoomValue>85 %</ZoomValue>
      </StatusBar>

      <Taskbar>
        <StartBtn>
          <svg width="17" height="17" viewBox="0 0 17 17"><path d="M0 2.4L7 1.4V8H0zM8 1.2L17 0v8H8zM0 9h7v6.6l-7-1zM8 9h9v8l-9-1.3z" fill="#fff" /></svg>
        </StartBtn>
        <SearchBox>
          <svg width="17" height="17" viewBox="0 0 17 17"><circle cx="10.5" cy="6.5" r="5.5" fill="none" stroke="#333" strokeWidth="1.2" /><path d="M6.5 10.5L1 16" stroke="#333" strokeWidth="1.5" /></svg>
          Buscar
          <Penguin width="82" height="41" viewBox="0 0 82 41">
            <path d="M2 41c8-8 18-11 28-8l6 8z" fill="#6aaee6" />
            <path d="M42 41c-1-14 4-21 12-26 8-5 18-10 28-14v40z" fill="#7b7d7c" />
            <path d="M50 20c8-7 18-11 26-9-7 2-14 7-19 13zM60 28c6-4 14-5 21-3-6 2-13 5-19 7zM68 36c4-3 9-3 14-2v5zM62 6c5-3 12-5 18-5-5 3-11 6-17 8z" fill="#c4c4c0" />
            <path d="M29 6c3-3 8-3 10 0 4 5 7 14 4 24-1 5-5 7-8 5-5-3-7-17-6-29z" fill="#1a2a52" />
            <path d="M36 9c4 5 6 14 3 22-1 3-4 4-5 2-2-5-1-17 2-24z" fill="#ece9dc" />
            <path d="M22 6l8-2 1 3z" fill="#a06060" />
            <path d="M31 36l5 1-2 3-5-1zM38 36l4 1-1 3-4-1z" fill="#e8a070" />
          </Penguin>
        </SearchBox>
        <TaskViewBtn>
          <svg width="19" height="17" viewBox="0 0 19 17"><path d="M0 .5h16M3.5 4.5h9v8h-9zM0 16.5h16M16.5 4v1M16.5 8v1M16.5 12v1" fill="none" stroke="#fff" /></svg>
        </TaskViewBtn>
        <TaskIcons>
          <TaskIcon $open>
            <svg width="23" height="20" viewBox="0 0 23 20"><path d="M0 1h9l2 2h12v16H0z" fill="#f0c040" /><path d="M0 6h23v13H0z" fill="#ffd767" /><path d="M6 11h11v8h-3v-4H9v4H6z" fill="#2f8fd8" /></svg>
          </TaskIcon>
          <TaskIcon $open>
            <svg width="24" height="24" viewBox="0 0 24 24"><circle cx="12" cy="12" r="9.5" fill="none" stroke="#d0203c" strokeWidth="2" /><ellipse cx="12" cy="12" rx="5" ry="9" fill="none" stroke="#d0203c" strokeWidth="2" /></svg>
          </TaskIcon>
          <TaskIcon $open>
            <svg width="25" height="25" viewBox="0 0 25 25"><defs><linearGradient id="edge" x1="0" y1="0" x2="1" y2="1"><stop offset="0" stopColor="#2fc6a4" /><stop offset="1" stopColor="#0c59a4" /></linearGradient></defs><circle cx="12.5" cy="12.5" r="12" fill="url(#edge)" /><path d="M25 13c0-5-4-7-8-7-6 0-10 4-9 10 1 5 6 8 11 6-4 0-6-2-6-5 0-2 1-3 3-3h9z" fill="#123a6a" /><path d="M24 15h-9c0-3 2-4 5-4 3 0 4 2 4 4z" fill="#8ee05a" /></svg>
          </TaskIcon>
          <TaskIcon>
            <svg width="24" height="24" viewBox="0 0 24 24"><path d="M1 6h22v15a2 2 0 0 1-2 2H3a2 2 0 0 1-2-2z" fill="#f2f2f2" /><path d="M8 6V3a2 2 0 0 1 2-2h4a2 2 0 0 1 2 2v3" fill="none" stroke="#1fa3dc" strokeWidth="1.6" /><path d="M7 10h4v4H7z" fill="#f25022" /><path d="M12 10h4v4h-4z" fill="#7fba00" /><path d="M7 15h4v4H7z" fill="#00a4ef" /><path d="M12 15h4v4h-4z" fill="#ffb900" /></svg>
          </TaskIcon>
          <TaskIcon>
            <svg width="24" height="22" viewBox="0 0 24 22"><path d="M12 0L24 7v15H0V7z" fill="#0a78d4" /><path d="M0 8l12 8 12-8v14H0z" fill="#50b8f0" /><path d="M2 7l10-5 10 5-10 7z" fill="#0a5ba8" /></svg>
          </TaskIcon>
          <TaskIcon $open>
            <svg width="24" height="24" viewBox="0 0 24 24"><path d="M17 1l6 3v16l-6 3L7 14l-4 3-2-1V8l2-1 4 3zM17 7l-6 5 6 5z" fill="#1c8ad8" /></svg>
          </TaskIcon>
          <TaskIcon $open>
            <svg width="26" height="25" viewBox="0 0 26 25"><circle cx="12" cy="12" r="12" fill="#5865f2" /><path d="M6 8c3-2 9-2 12 0l2 7c-1 1-3 2-4 2l-1-2H9l-1 2c-1 0-3-1-4-2z" fill="#fff" /><circle cx="9.5" cy="12" r="1.6" fill="#5865f2" /><circle cx="14.5" cy="12" r="1.6" fill="#5865f2" /><circle cx="18.5" cy="18.5" r="6.5" fill="#ed4245" /><text x="18.5" y="22" textAnchor="middle" fontSize="10" fontWeight="700" fontFamily={ARIAL} fill="#fff">1</text></svg>
          </TaskIcon>
          <TaskIcon $open>
            <svg width="24" height="24" viewBox="0 0 24 24"><rect width="24" height="24" rx="5" fill="#0b1a6e" /><circle cx="12" cy="12" r="9.5" fill="#fff" /><path d="M5 12l4-3v2h6V9l4 3-4 3v-2H9v2z" fill="#0b1a6e" /></svg>
          </TaskIcon>
          <TaskIcon $w={48} $on $open>
            <svg width="24" height="24" viewBox="0 0 24 24"><path d="M0 2l13-2v24L0 22z" fill="#217346" /><path d="M13 3h10v18H13z" fill="#fff" /><path d="M15 6h3v3h-3zM19 6h3v3h-3zM15 10h3v3h-3zM19 10h3v3h-3zM15 14h3v3h-3zM19 14h3v3h-3z" fill="#217346" /><text x="6.5" y="16" textAnchor="middle" fontSize="11" fontWeight="700" fontFamily={ARIAL} fill="#fff">X</text></svg>
          </TaskIcon>
          <TaskIcon $open>
            <svg width="25" height="25" viewBox="0 0 25 25"><path d="M1 14c0-6 7-9 12-8 5 1 8 4 6 9-1 3-5 2-7 3-2 1-1 4-4 4-4 0-7-4-7-8z" fill="#dfe6ee" /><circle cx="6" cy="12" r="2" fill="#4aa8e0" /><circle cx="10" cy="9" r="2" fill="#e85050" /><circle cx="15" cy="10" r="1.8" fill="#f0c040" /><circle cx="6" cy="17" r="1.8" fill="#60c060" /><path d="M13 18l8-14 2 1-6 15z" fill="#e8a050" /><path d="M21 4l2-4 2 1-2 4z" fill="#b06030" /></svg>
          </TaskIcon>
        </TaskIcons>
        <Tray>
          <TraySlot $w={24}>
            <svg width="13" height="7" viewBox="0 0 13 7"><path d="M1 6.5L6.5 1 12 6.5" fill="none" stroke="#fff" /></svg>
          </TraySlot>
          <TraySlot $w={24}>
            <svg width="13" height="17" viewBox="0 0 13 17"><path d="M1 2c3-2 6-2 8 0M1 15c3 2 6 2 8 0" fill="none" stroke="#fff" /><path d="M.5 5.5h8v6h-8zM8.5 8l4-2v5l-4-2" fill="none" stroke="#fff" /></svg>
          </TraySlot>
          <TraySlot $w={24}>
            <svg width="17" height="15" viewBox="0 0 17 15"><path d="M.5.5h5v5h-5zM4 3h12.5v8H3V6M9 11v3M5 14.5h9" fill="none" stroke="#fff" /></svg>
          </TraySlot>
          <TraySlot $w={20}>
            <svg width="16" height="14" viewBox="0 0 16 14"><path d="M.5 4.5h2L7 .5v13l-4.5-4h-2zM9 4c1.5 2 1.5 4 0 6M11 2.5c2.5 3 2.5 6 0 9M13 1c3.5 4 3.5 8 0 12" fill="none" stroke="#fff" /></svg>
          </TraySlot>
          <TraySlot $w={42}>ESP</TraySlot>
          <Clock>20:24<br />25/4/2023</Clock>
          <TraySlot $w={42}>
            <svg width="17" height="15" viewBox="0 0 17 15"><path d="M.5.5h16v11h-5l-3 3v-3h-8z" fill="none" stroke="#fff" /></svg>
          </TraySlot>
          <ShowDesktop />
        </Tray>
      </Taskbar>
    </Window>
  );
}
